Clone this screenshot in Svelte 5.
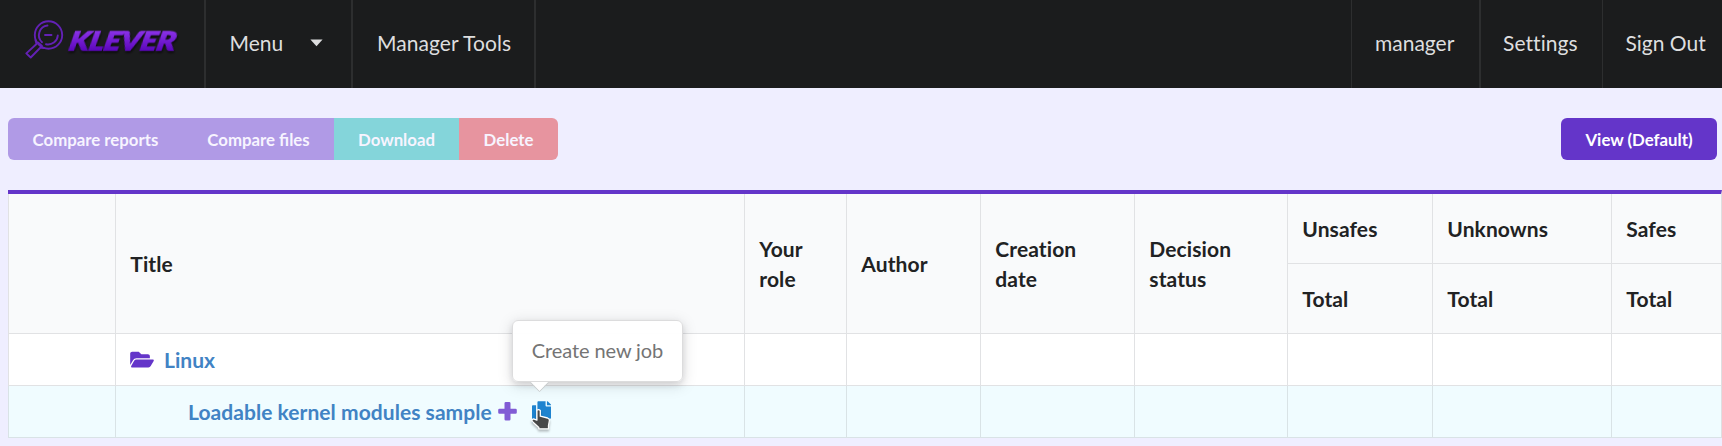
<script>
  const actions = [
    { label: 'Compare reports', kind: 'violet first' },
    { label: 'Compare files', kind: 'violet second' },
    { label: 'Download', kind: 'teal' },
    { label: 'Delete', kind: 'red' },
  ];
  const columns = ['Your role', 'Author', 'Creation date', 'Decision status'];
  const totals = ['Unsafes', 'Unknowns', 'Safes'];
  const blanks = [0, 1, 2, 3, 4, 5, 6];
</script>

<nav>
  <a class="brand" href="#home" aria-label="Klever">
    <svg width="204" height="88" viewBox="0 0 204 88">
      <defs>
        <linearGradient id="violet" x1="0" y1="0" x2="0" y2="1">
          <stop offset="0.2" stop-color="#8b32e8" />
          <stop offset="0.8" stop-color="#5d08bd" />
        </linearGradient>
      </defs>
      <g fill="none" stroke="#6321b5" stroke-width="1.9" stroke-linecap="round" stroke-linejoin="round">
        <circle cx="48.5" cy="35" r="13.7" />
        <path d="M47.5 25.5A9.7 9.7 0 0 0 42 42.2M46 44.3A9.7 9.7 0 0 0 57.8 35.5M45 35h6.500" />
        <path d="M35.500 40L36.500 44L26.300 53.400L30.700 57.500L40.500 47.500L44 48M38 42.500L42 46" />
      </g>
      <g transform="translate(68 50.200) skewX(-12)">
        <text class="logo" x="0" y="0" textLength="106" lengthAdjust="spacingAndGlyphs">KLEVER</text>
      </g>
    </svg>
  </a>
  <a class="item menu" href="#menu">Menu
    <svg width="13" height="8" viewBox="0 0 13 8"><path d="M.4.500h12.200L6.500 7.200z" fill="#dededf" /></svg>
  </a>
  <a class="item tools" href="#tools">Manager Tools</a>
  <a class="item user" href="#user">manager</a>
  <a class="item settings" href="#settings">Settings</a>
  <a class="item out" href="#out">Sign Out</a>
</nav>

<main>
  <div class="toolbar">
    <div class="buttons">
      {#each actions as a}<button class={a.kind} disabled>{a.label}</button>{/each}
    </div>
    <button class="view">View (Default)</button>
  </div>

  <div class="table">
    <div class="cell head tall"></div>
    <div class="cell head tall">Title</div>
    {#each columns as c}<div class="cell head tall">{c}</div>{/each}
    {#each totals as t}<div class="cell head">{t}</div>{/each}
    {#each totals as t}<div class="cell head">Total</div>{/each}

    <div class="cell"></div>
    <div class="cell">
      <svg class="folder" width="24" height="21" viewBox="0 0 576 512"><path fill="#6435c9" d="M572.694 292.093L500.270 416.248A63.997 63.997 0 0 1 444.989 448H45.025c-18.523 0-30.064-20.093-20.731-36.093l72.424-124.155A64 64 0 0 1 152 256h399.964c18.523 0 30.064 20.093 20.730 36.093zM152 224h328v-48c0-26.510-21.490-48-48-48H272l-64-64H48C21.490 64 0 85.490 0 112v278.046l69.077-118.418C86.214 242.250 117.989 224 152 224z" /></svg>
      <a href="#linux">Linux</a>
    </div>
    {#each blanks as b}<div class="cell"></div>{/each}

    <div class="cell job"></div>
    <div class="cell job name">
      <a href="#sample">Loadable kernel modules sample</a>
      <svg class="plus" width="19" height="19" viewBox="0 0 19 19"><path fill="#815cd5" d="M7.800 0h3.400q1.300 0 1.300 1.300v5.400h5q1.300 0 1.300 1.300v2.500q0 1.300-1.300 1.300h-5v5.400q0 1.300-1.300 1.300H7.800q-1.300 0-1.300-1.300v-5.400h-5q-1.300 0-1.300-1.300V8q0-1.300 1.300-1.300h5V1.300Q6.500 0 7.800 0z" /></svg>
      <span class="copy">
        <svg width="19" height="22" viewBox="0 0 448 512"><path fill="#1e83cf" d="M320 448v40c0 13.255-10.745 24-24 24H24c-13.255 0-24-10.745-24-24V120c0-13.255 10.745-24 24-24h72v296c0 30.879 25.121 56 56 56h168zm0-344V0H152c-13.255 0-24 10.745-24 24v368c0 13.255 10.745 24 24 24h272c13.255 0 24-10.745 24-24V128H344c-13.200 0-24-10.800-24-24zm120.971-31.029L375.029 7.029A24 24 0 0 0 358.059 0H352v96h96v-6.059a24 24 0 0 0-7.029-16.970z" /></svg>
        <span class="popup">Create new job</span>
        <svg class="pointer" width="22" height="26" viewBox="0 0 22 26"><path fill="#484848" stroke="#fff" stroke-width="1.300" stroke-linejoin="round" d="M6.900 3.200Q8.700 1.800 10.300 3.500V9.200L17.600 11Q19.500 11.600 19.400 13.500L18.500 18.500V21.800H8.800V20.400L2.300 14.400Q1.300 12.500 3.500 11.800L6.900 13.200z" /></svg>
      </span>
    </div>
    {#each blanks as b}<div class="cell job"></div>{/each}
  </div>
</main>

<style>
  :global(body) {
    background: #efeeff;
    font-family: Lato, sans-serif;
    font-size: 21px;
    line-height: 30px;
    color: #212223;
    overflow: hidden;
    font-variant-ligatures: none;
  }
  a { text-decoration: none; color: #4183c4; }
  nav {
    display: flex;
    height: 88px;
    background: #1b1c1d;
  }
  .brand { width: 204px; }
  .brand svg { display: block; }
  .logo {
    font: italic 900 26px Lato, sans-serif;
    fill: url(#violet);
    stroke: url(#violet);
    stroke-width: 1.3;
    filter: drop-shadow(1px 2px 1px #0009);
  }
  .item {
    box-sizing: border-box;
    display: flex;
    align-items: center;
    color: #dededf;
    padding-left: 23px;
    padding-bottom: 2px;
    border-left: 2px solid #2d2e2f;
    white-space: nowrap;
  }
  .menu { width: 147px; padding-left: 23.5px; }
  .menu svg { margin-left: 27px; margin-top: -1px; }
  .tools { width: 185px; padding-left: 24px; letter-spacing: 0.06px; border-right: 2px solid #2d2e2f; }
  .user { margin-left: auto; width: 128px; border-left-width: 1px; }
  .settings { width: 123px; padding-left: 22px; letter-spacing: 0.06px; }
  .out { width: 120px; border-left-width: 1px; padding-left: 22.5px; }
  main { padding: 30px 0 0 8px; }
  .toolbar {
    display: flex;
    justify-content: space-between;
    padding-right: 5px;
    margin-bottom: 30px;
  }
  .buttons { display: flex; border-radius: 6px; overflow: hidden; }
  button {
    height: 42px;
    border: 0;
    padding: 1px 0 0;
    color: #fff;
    font: bold 16.8px/17px Lato, sans-serif;
    font-variant-ligatures: common-ligatures;
  }
  button:disabled { color: #f7f4ff; }
  .violet { background: #b09ae6; }
  .first { width: 175px; }
  .second { width: 151px; }
  .teal { width: 125px; background: #84d5da; }
  .red { width: 99px; background: #e7949f; }
  .view { width: 156px; border-radius: 6px; background: #6435c9; }
  .table {
    display: grid;
    grid-template-columns: 107px 629px 102px 134px 154px 153px 145px 179px 110px;
    grid-template-rows: 70px 70px 52px 52px;
    border-top: 4px solid #6435c9;
    border-right: 1px solid #dedfe1;
  }
  .cell {
    box-sizing: border-box;
    display: flex;
    align-items: center;
    border-left: 1px solid #e1e2e4;
    border-bottom: 1px solid #e1e2e4;
    padding: 0 14.3px;
    background: #fff;
    font-weight: bold;
    letter-spacing: 0.05px;
  }
  .head { background: #f9fafb; letter-spacing: 0.1px; }
  .tall { grid-row: span 2; }
  .job { background: #f0fcff; border-color: #d9e3e6; }
  .folder { margin-right: 9.7px; }
  .name { padding-left: 72px; }
  .plus { margin-left: 6.5px; }
  .copy { position: relative; height: 22px; margin-left: 15px; }
  .copy > svg { display: block; }
  .popup {
    position: absolute;
    left: -20.5px;
    bottom: 41px;
    box-sizing: border-box;
    width: 171px;
    height: 62px;
    padding: 14px 19px;
    border: 1px solid #dcdcdd;
    border-radius: 6px;
    background: #fffffff2;
    box-shadow: 0 3px 6px #2224261f, 0 3px 15px #22242626;
    color: #747474;
    font-size: 20px;
    letter-spacing: -0.09px;
    font-weight: normal;
    white-space: nowrap;
  }
  .popup::after {
    content: '';
    position: absolute;
    left: 20px;
    bottom: -7px;
    width: 13px;
    height: 13px;
    background: linear-gradient(135deg, transparent 50%, #fff 50%);
    box-shadow: 1px 1px 0 #c9cdce;
    transform: rotate(45deg);
  }
  .copy .pointer { position: absolute; left: -2px; top: 6px; filter: drop-shadow(0 2px 1px #0004); }
</style>
